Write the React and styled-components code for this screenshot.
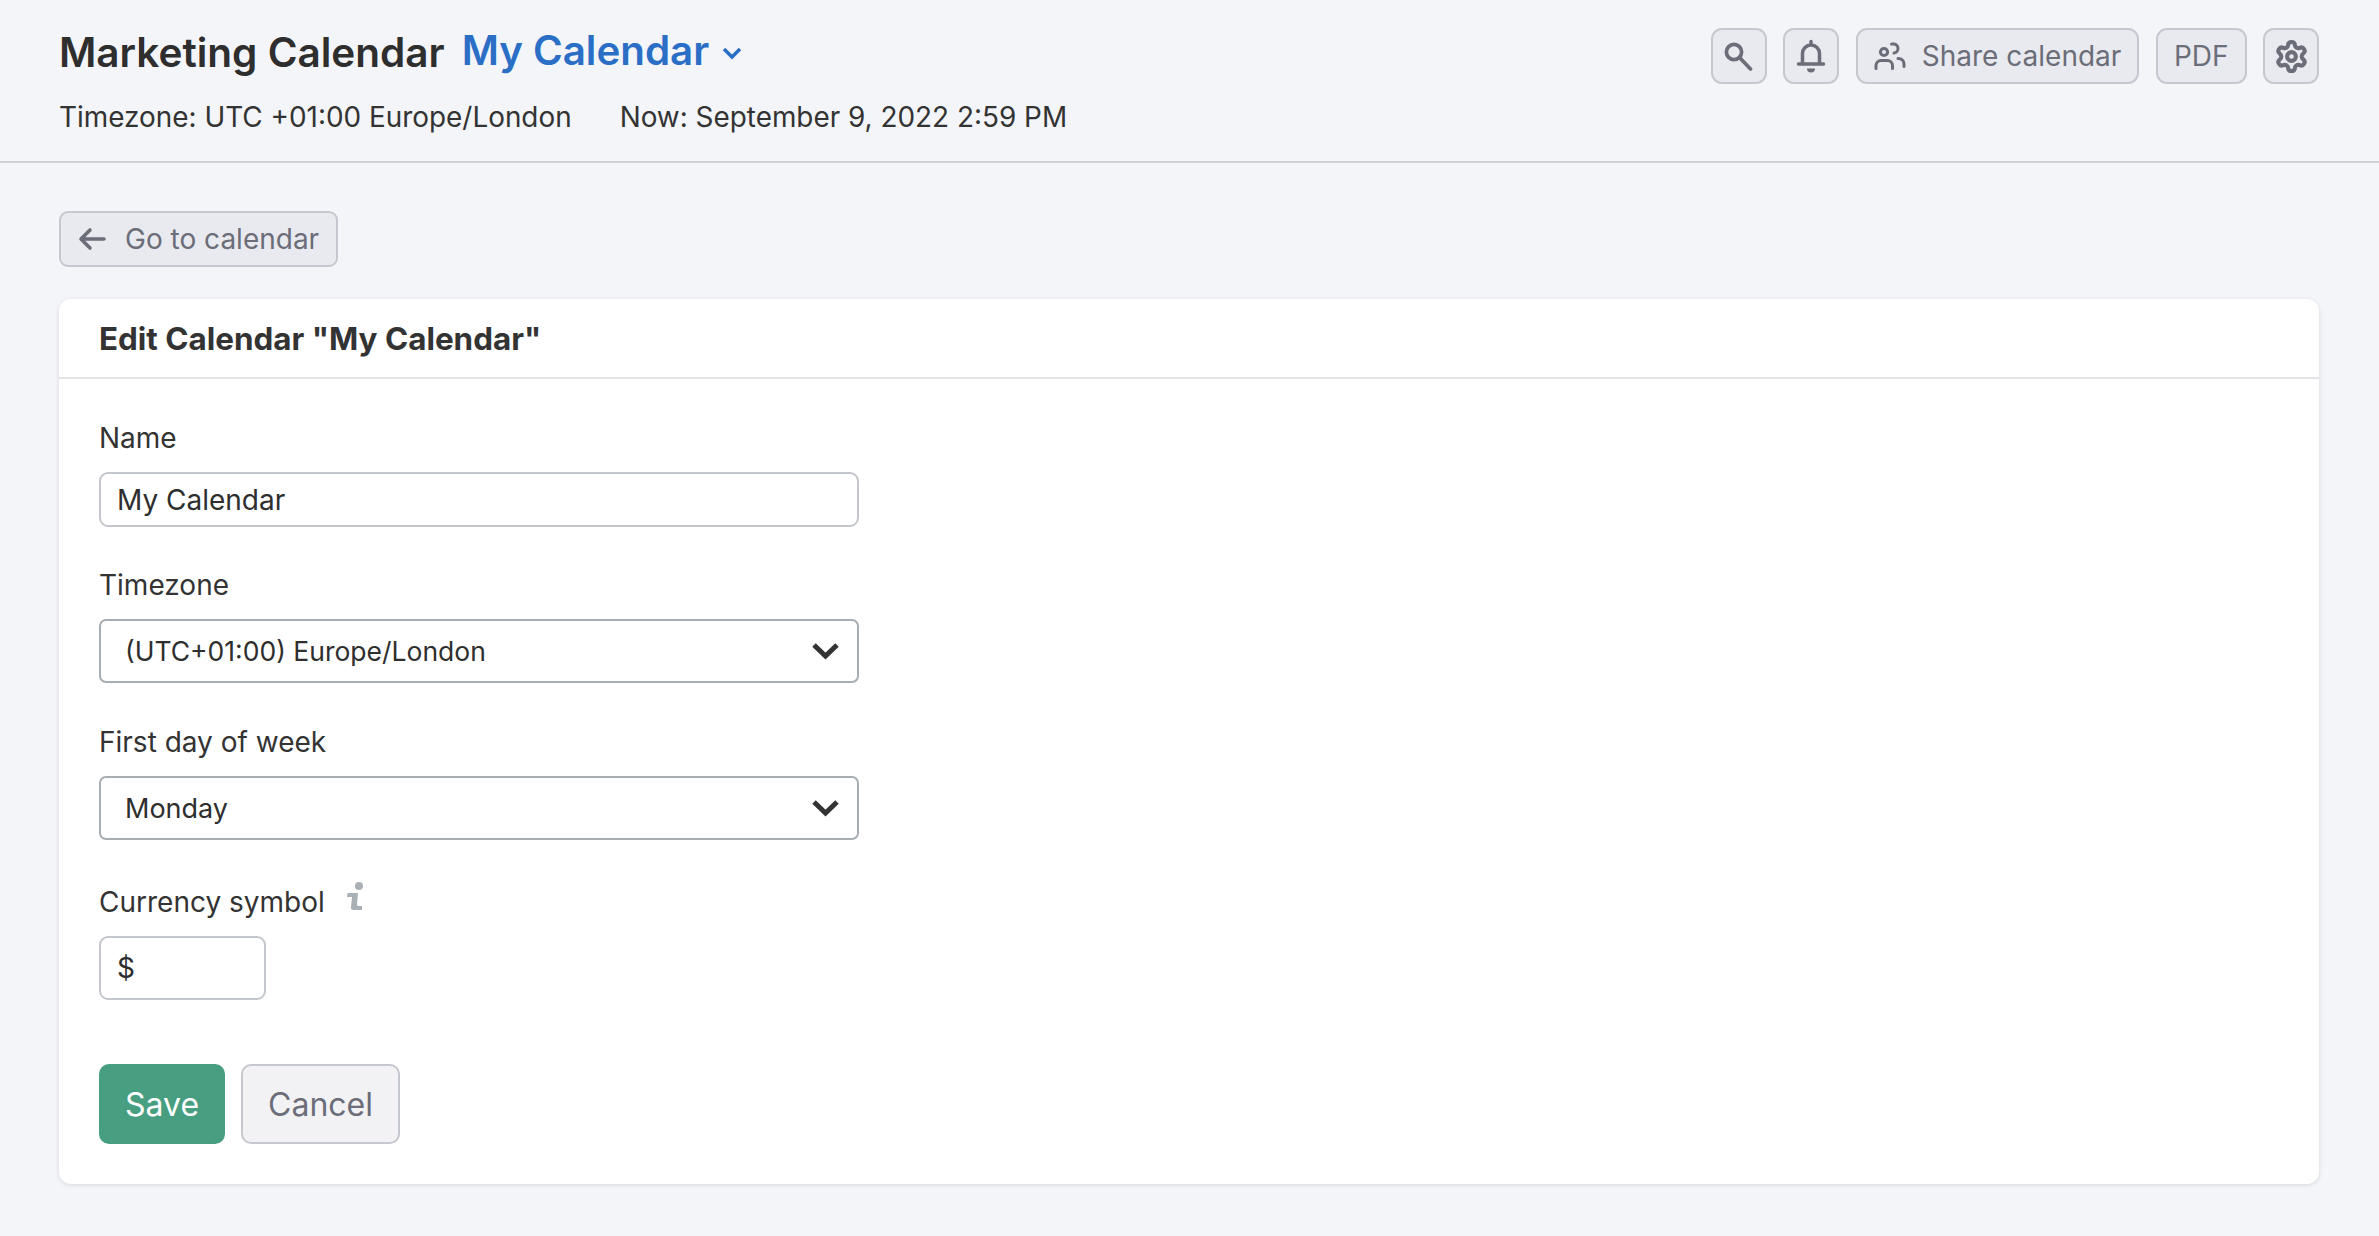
import styled, { createGlobalStyle } from "styled-components";
import { Settings } from "lucide-react";

const GlobalStyle = createGlobalStyle`
  * {
    box-sizing: border-box;
  }
  body {
    margin: 0;
    background: #f3f5f9;
    font-family: Inter, "Liberation Sans", sans-serif;
    color: #2e2e2e;
  }
`;

const Page = styled.div`
  min-height: 1236px;
  background: #f3f5f9;
`;

const Header = styled.header`
  height: 163px;
  padding: 28px 60px 0 59px;
  border-bottom: 2px solid #cdcfd1;
  display: flex;
  justify-content: space-between;
  align-items: flex-start;
`;

const TitleRow = styled.div`
  display: flex;
  align-items: center;
  height: 48px;
  margin-top: 1px;
`;

const Title = styled.h1`
  margin: 0;
  font-size: 40.5px;
  font-weight: 600;
  line-height: 48px;
  color: #2e2e2e;
`;

const CalendarName = styled.span`
  margin-left: 17px;
  font-size: 40.3px;
  font-weight: 600;
  line-height: 48px;
  color: #2a6ec6;
  position: relative;
  top: -2px;
`;

const Caret = styled.svg`
  margin-left: 12px;
  width: 22px;
  height: 14px;
  fill: none;
  stroke: #2a6ec6;
  stroke-width: 3.5;
`;

const SubRow = styled.div`
  display: flex;
  gap: 48px;
  margin-top: 23px;
  font-size: 27.9px;
  line-height: 34px;
  color: #333;
`;

const Toolbar = styled.div`
  display: flex;
  gap: 16.5px;
`;

const ToolButton = styled.button`
  height: 56px;
  min-width: 56px;
  padding: ${(p) => (p.$icon ? "0" : "0 16px")};
  display: flex;
  align-items: center;
  justify-content: center;
  gap: 16px;
  font-family: inherit;
  font-size: 28px;
  color: #6b6d78;
  background: #e9eaef;
  border: 2px solid #c6c8cf;
  border-radius: 11px;
`;

const Main = styled.main`
  padding: 48px 60px 0 59px;
`;

const BackButton = styled(ToolButton)`
  gap: 18px;
  padding: 0 17px 0 16px;
  border-radius: 9px;
`;

const Card = styled.section`
  margin-top: 32px;
  background: #fff;
  border-radius: 12px;
  box-shadow: 0 1px 4px rgba(40, 45, 60, 0.14);
`;

const CardHeader = styled.div`
  height: 80px;
  padding: 2px 40px 0;
  display: flex;
  align-items: center;
  border-bottom: 2px solid #e3e4e8;
`;

const CardTitle = styled.h2`
  margin: 0;
  font-size: 31.4px;
  font-weight: 700;
  color: #333;
`;

const Form = styled.form`
  padding: 39px 40px 40px;
`;

const Field = styled.div`
  margin-bottom: ${(p) => p.$gap || 38}px;
`;

const Label = styled.label`
  display: flex;
  align-items: center;
  font-size: 28px;
  line-height: 40px;
  margin-bottom: 14px;
  color: #333;
`;

const InfoIcon = styled.svg`
  margin-left: 22px;
  width: 16px;
  height: 28px;
  fill: #aab1b6;
  position: relative;
  top: -6px;
`;

const TextBox = styled.div`
  height: ${(p) => p.$height || 55}px;
  width: ${(p) => p.$width || 760}px;
  padding: 0 16px;
  display: flex;
  align-items: center;
  font-size: 28px;
  color: #2e2e2e;
  background: #fff;
  border: 2px solid #c3c6cb;
  border-radius: 9px;
`;

const SelectBox = styled(TextBox)`
  height: 64px;
  padding: 0 17px 0 24px;
  justify-content: space-between;
  font-size: ${(p) => p.$size || 27}px;
  border-color: #a8adb2;
  border-radius: 7px;
`;

const Actions = styled.div`
  display: flex;
  gap: 16px;
  margin-top: 64px;
`;

const ActionButton = styled.button`
  height: 80px;
  padding: 0 ${(p) => (p.$primary ? 24 : 25)}px;
  font-family: inherit;
  font-size: 32px;
  border-radius: 10px;
  color: ${(p) => (p.$primary ? "#fff" : "#6b6d78")};
  background: ${(p) => (p.$primary ? "#479e80" : "#f2f2f5")};
  border: 2px solid ${(p) => (p.$primary ? "#479e80" : "#c6c8cf")};
`;

const Icon = styled.svg`
  display: block;
  fill: none;
  stroke: #6b6d78;
  stroke-linecap: round;
  stroke-linejoin: round;
`;

function SelectChevron() {
  return (
    <svg width="29" height="18" viewBox="0 0 29 18">
      <path d="M3 3 L14.5 14 L26 3" fill="none" stroke="#333" strokeWidth="5" />
    </svg>
  );
}

export default function App() {
  return (
    <Page>
      <GlobalStyle />
      <Header>
        <div>
          <TitleRow>
            <Title>Marketing Calendar</Title>
            <CalendarName>My Calendar</CalendarName>
            <Caret viewBox="0 0 22 14">
              <path d="M3 3 L11 11 L19 3" />
            </Caret>
          </TitleRow>
          <SubRow>
            <span>Timezone: UTC +01:00 Europe/London</span>
            <span>Now: September 9, 2022 2:59 PM</span>
          </SubRow>
        </div>
        <Toolbar>
          <ToolButton $icon>
            <Icon width="29" height="29" viewBox="0 0 29 29" strokeWidth="3.7">
              <circle cx="10" cy="10" r="7.6" />
              <path d="M15.5 15.5 L26.5 27" />
            </Icon>
          </ToolButton>
          <ToolButton $icon>
            <Icon width="30" height="34" viewBox="0 0 30 34" strokeWidth="3.5">
              <path d="M15 2.5V5M6.5 24V14.5a8.5 8.5 0 0 1 17 0V24M2.5 25H27.5" />
              <path d="M11 29.5h8a4 4 0 0 1-8 0z" fill="#6b6d78" stroke="none" />
            </Icon>
          </ToolButton>
          <ToolButton>
            <Icon width="32" height="28" viewBox="0 0 32 28" strokeWidth="3">
              <circle cx="10" cy="10" r="3.6" />
              <path d="M2 26.5V23.5a5 5 0 0 1 5-5h6.5a5 5 0 0 1 5 5v3M17.5 2h1.5a4.5 4.5 0 0 1 1 9" />
              <path d="M24 16.5a5.5 5.5 0 0 1 6 5.5v2.5" />
            </Icon>
            Share calendar
          </ToolButton>
          <ToolButton>PDF</ToolButton>
          <ToolButton $icon>
            <Settings size={35} color="#6b6d78" strokeWidth={2.8} />
          </ToolButton>
        </Toolbar>
      </Header>
      <Main>
        <BackButton>
          <Icon width="30" height="26" viewBox="0 0 30 26" strokeWidth="3.6">
            <path d="M27 13H4M13 4 L4 13 L13 22" />
          </Icon>
          Go to calendar
        </BackButton>
        <Card>
          <CardHeader>
            <CardTitle>Edit Calendar "My Calendar"</CardTitle>
          </CardHeader>
          <Form>
            <Field>
              <Label>Name</Label>
              <TextBox>My Calendar</TextBox>
            </Field>
            <Field $gap={39}>
              <Label>Timezone</Label>
              <SelectBox $size={26.5}>
                (UTC+01:00) Europe/London
                <SelectChevron />
              </SelectBox>
            </Field>
            <Field $gap={42}>
              <Label>First day of week</Label>
              <SelectBox>
                Monday
                <SelectChevron />
              </SelectBox>
            </Field>
            <Field>
              <Label>
                Currency symbol
                <InfoIcon viewBox="0 0 16 28">
                  <circle cx="12" cy="4" r="4" />
                  <path d="M.5 11H11L10 22.5Q10 24 11.5 24H15V28H6.5Q3.5 28 4 25L5 15H0Z" />
                </InfoIcon>
              </Label>
              <TextBox $width={167} $height={64}>$</TextBox>
            </Field>
            <Actions>
              <ActionButton $primary>Save</ActionButton>
              <ActionButton>Cancel</ActionButton>
            </Actions>
          </Form>
        </Card>
      </Main>
    </Page>
  );
}
